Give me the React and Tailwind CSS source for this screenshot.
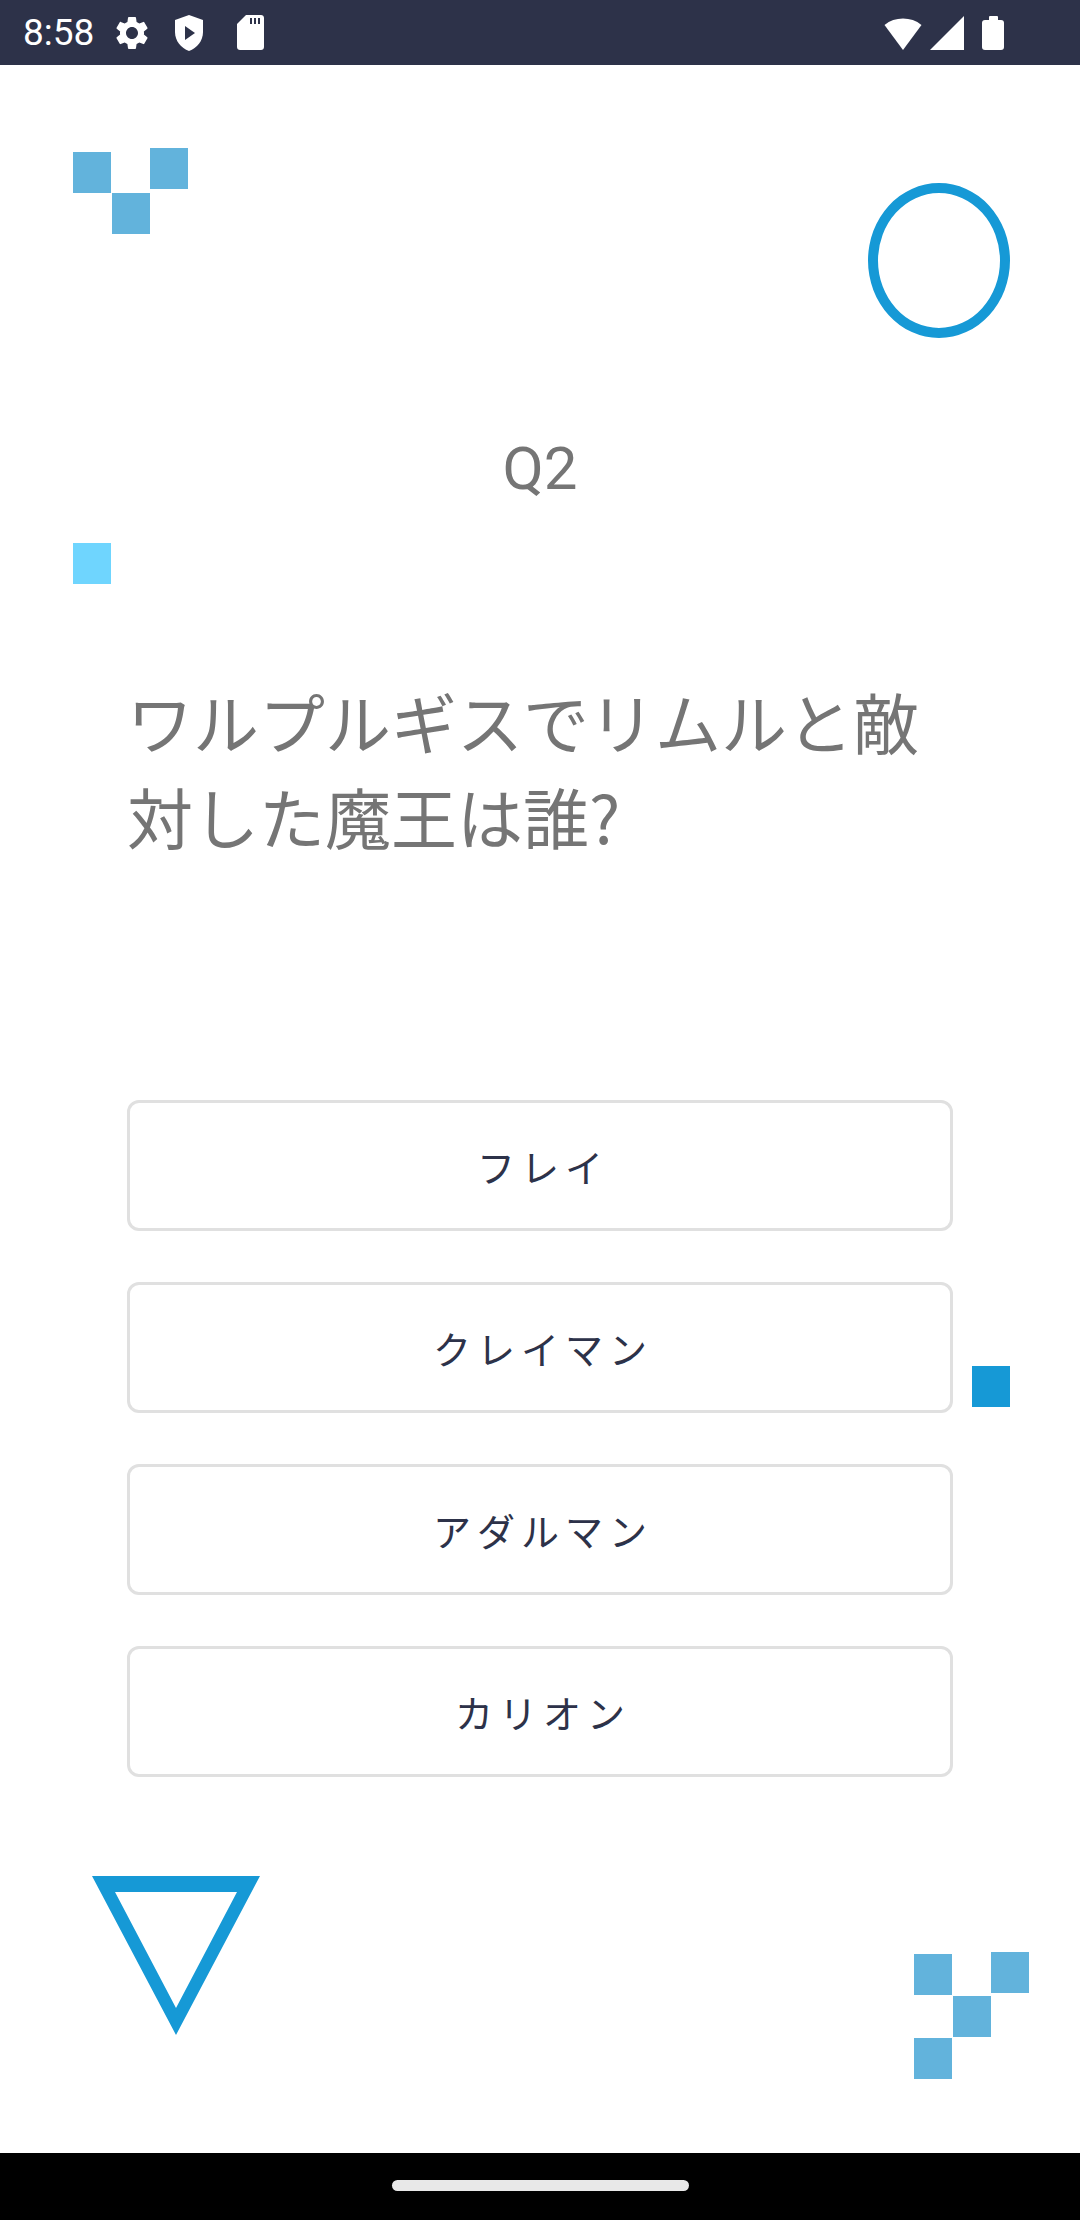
import React from "react";

function StatusBar() {
  return (
    <div className="h-[65px] shrink-0 bg-[#2d3249] flex items-center pl-[23px] pr-[76px] text-white">
      <span className="font-['Roboto',sans-serif] text-[37px] leading-none">8:58</span>
      {/* gear */}
      <svg className="ml-[18px]" width="40" height="40" viewBox="0 0 24 24" fill="white">
        <path d="M19.14 12.94c.04-.3.06-.61.06-.94 0-.32-.02-.64-.07-.94l2.03-1.58a.49.49 0 0 0 .12-.61l-1.92-3.32a.488.488 0 0 0-.59-.22l-2.39.96c-.5-.38-1.030-.7-1.62-.94l-.36-2.54a.484.484 0 0 0-.48-.41h-3.84c-.24 0-.43.17-.47.41l-.36 2.54c-.59.24-1.13.57-1.62.94l-2.39-.96c-.22-.08-.47 0-.59.22L2.74 8.87c-.12.21-.08.47.12.61l2.03 1.58c-.05.3-.09.63-.09.94s.02.64.07.94l-2.03 1.58a.49.49 0 0 0-.12.61l1.92 3.32c.12.22.37.29.59.22l2.39-.96c.5.38 1.03.7 1.62.94l.36 2.54c.05.24.24.41.48.41h3.84c.24 0 .44-.17.47-.41l.36-2.54c.59-.24 1.13-.56 1.62-.94l2.39.96c.22.08.47 0 .59-.22l1.92-3.32c.12-.22.07-.47-.12-.61l-2.01-1.58zM12 15.6c-1.98 0-3.6-1.62-3.6-3.6s1.62-3.6 3.6-3.6 3.6 1.62 3.6 3.6-1.62 3.6-3.6 3.6z" />
      </svg>
      {/* shield with play */}
      <svg className="ml-[21px]" width="32" height="38" viewBox="0 0 32 38">
        <path d="M16 1 L30 6 L30 18 C30 27 24 34 16 37 C8 34 2 27 2 18 L2 6 Z" fill="white" />
        <path d="M12 12 L22 19 L12 26 Z" fill="#2d3249" />
      </svg>
      {/* sd card */}
      <svg className="ml-[32px]" width="27" height="35" viewBox="0 0 27 35">
        <path d="M9 0 H24 C25.7 0 27 1.3 27 3 V32 C27 33.7 25.7 35 24 35 H3 C1.3 35 0 33.7 0 32 V9 Z" fill="white" />
        <rect x="13" y="3" width="2" height="6" fill="#2d3249" />
        <rect x="17" y="3" width="2" height="6" fill="#2d3249" />
        <rect x="21" y="3" width="2" height="6" fill="#2d3249" />
      </svg>
      <div className="flex-1" />
      {/* wifi */}
      <svg width="38" height="34" viewBox="0 0 38 34">
        <path d="M19 34 L0.5 9 A30 30 0 0 1 37.5 9 Z" fill="white" />
      </svg>
      {/* signal */}
      <svg className="ml-[8px]" width="34" height="34" viewBox="0 0 34 34">
        <path d="M34 0 L34 34 L0 34 Z" fill="white" />
      </svg>
      {/* battery */}
      <div className="ml-[18px] flex flex-col items-center">
        <div className="w-[9px] h-[4px] bg-white rounded-t-[1px]" />
        <div className="w-[22px] h-[30px] bg-white rounded-[3px]" />
      </div>
    </div>
  );
}

function NavBar() {
  return (
    <div className="h-[67px] shrink-0 bg-black flex justify-center pt-[27px]">
      <div className="w-[297px] h-[11px] rounded-full bg-[#e8e8e8]" />
    </div>
  );
}

const SQ = "absolute w-[38px] h-[41px] bg-[#62b3dc]";

function Option({ label }) {
  return (
    <div className="h-[131px] border-[3px] border-[#e0e0e0] rounded-[12px] bg-white flex items-center justify-center pl-[6px]">
      <span className="font-['Noto_Sans_CJK_JP','Noto_Sans',sans-serif] text-[38px] tracking-[6px] text-[#2d3249] leading-none">
        {label}
      </span>
    </div>
  );
}

export default function App() {
  return (
    <div className="w-[1080px] h-[2220px] flex flex-col bg-white overflow-hidden">
      <StatusBar />
      <main className="relative h-[2088px] shrink-0 flex flex-col">
        {/* decorations: top-left squares */}
        <div className={`${SQ} left-[73px] top-[87px]`} />
        <div className={`${SQ} left-[112px] top-[128px]`} />
        <div className={`${SQ} left-[150px] top-[83px]`} />
        {/* circle */}
        <div className="absolute left-[868px] top-[118px] w-[142px] h-[155px] rounded-[50%] border-[10px] border-[#1699d6]" />
        {/* light square */}
        <div className="absolute left-[73px] top-[478px] w-[38px] h-[41px] bg-[#6fd5fe]" />
        {/* blue square right */}
        <div className="absolute left-[972px] top-[1301px] w-[38px] h-[41px] bg-[#1699d6]" />
        {/* triangle */}
        <svg className="absolute left-[92px] top-[1811px]" width="168" height="159" viewBox="0 0 168 159">
          <path fillRule="evenodd" d="M0 0 H168 L84 159 Z M23 16 L145 16 L84 132 Z" fill="#1699d6" />
        </svg>
        {/* bottom-right squares */}
        <div className={`${SQ} left-[914px] top-[1889px]`} />
        <div className={`${SQ} left-[991px] top-[1887px]`} />
        <div className={`${SQ} left-[953px] top-[1931px]`} />
        <div className={`${SQ} left-[914px] top-[1973px]`} />

        <div className="mt-[374px] text-center font-['Roboto',sans-serif] text-[60px] leading-[60px] text-[#757575]">
          Q2
        </div>
        <p className="mt-[174px] ml-[127px] w-[824px] font-['Noto_Sans_CJK_JP','Noto_Sans',sans-serif] text-[66px] leading-[95px] text-[#757575]">
          ワルプルギスでリムルと敵
          <br />
          対した魔王は誰?
        </p>
        <div className="mt-[237px] mx-[127px] flex flex-col gap-[51px]">
          <Option label="フレイ" />
          <Option label="クレイマン" />
          <Option label="アダルマン" />
          <Option label="カリオン" />
        </div>
      </main>
      <NavBar />
    </div>
  );
}
